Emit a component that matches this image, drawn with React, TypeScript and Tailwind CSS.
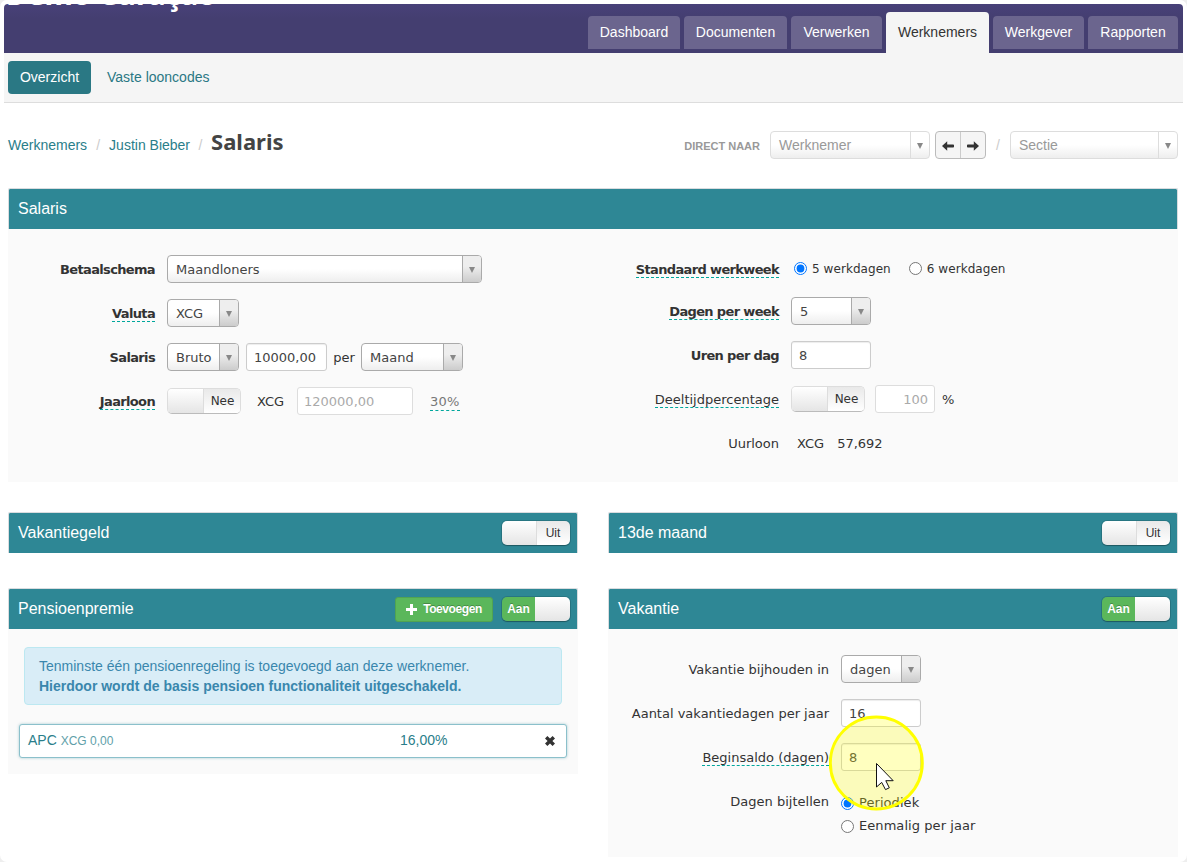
import { useState } from 'react';
import type { ReactNode } from 'react';
import clsx from 'clsx';

const FORM_FONT = "font-['DejaVu_Sans',sans-serif] text-[13px]";

const NAV_ITEMS = [
  { label: 'Dashboard', width: 'w-[92px]' },
  { label: 'Documenten', width: 'w-[103px]' },
  { label: 'Verwerken', width: 'w-[91px]' },
  { label: 'Werknemers', width: 'w-[103px]' },
  { label: 'Werkgever', width: 'w-[91px]' },
  { label: 'Rapporten', width: 'w-[90px]' },
];

// ---------------------------------------------------------------------------
// Icons
// ---------------------------------------------------------------------------

function ArrowIcon({ flip = false }: { flip?: boolean }) {
  return (
    <svg viewBox="0 0 12 10" className={clsx('h-[10px] w-3 fill-current', flip && '-scale-x-100')}>
      <path d="M0 5 5.2 0.3V3.4H11.2Q12 3.4 12 4.2V5.8Q12 6.6 11.2 6.6H5.2V9.7Z" />
    </svg>
  );
}

function PlusIcon() {
  return (
    <svg viewBox="0 0 11 11" className="h-[11px] w-[11px] fill-current">
      <path d="M4 0h3v4h4v3H7v4H4V7H0V4h4z" />
    </svg>
  );
}

function CrossIcon() {
  return (
    <svg viewBox="0 0 10 10" className="h-[10px] w-[10px] fill-current">
      <path d="M2.4 0 5 2.6 7.6 0 10 2.4 7.4 5 10 7.6 7.6 10 5 7.4 2.4 10 0 7.6 2.6 5 0 2.4z" />
    </svg>
  );
}

// ---------------------------------------------------------------------------
// Form controls
// ---------------------------------------------------------------------------

interface SelectProps {
  value: string;
  className: string;
  muted?: boolean;
}

function Select({ value, className, muted = false }: SelectProps) {
  return (
    <button
      type="button"
      className={clsx(
        'flex h-7 shrink-0 overflow-hidden rounded-[4px] border bg-gradient-to-b from-white from-50% to-[#eee] text-left',
        muted ? 'border-[#ddd] leading-[26px] text-[#999]' : 'border-[#aaa] leading-7 text-[#444]',
        className,
      )}
    >
      <span className="flex-1 pl-2 whitespace-nowrap">{value}</span>
      <span
        className={clsx(
          'flex h-full w-[19px] items-center justify-center border-l pt-[2px] pr-px',
          muted ? 'border-[#ddd]' : 'border-[#aaa] bg-gradient-to-b from-[#eee] from-40% to-[#ccc]',
        )}
      >
        <svg viewBox="0 0 6 6" className="h-[6px] w-[6px] fill-[#888]">
          <path d="M0 0h6L3 6z" />
        </svg>
      </span>
    </button>
  );
}

interface TextInputProps {
  value: string;
  className: string;
  disabled?: boolean;
}

function TextInput({ value, className, disabled = false }: TextInputProps) {
  return (
    <input
      type="text"
      defaultValue={value}
      disabled={disabled}
      className={clsx(
        'h-7 shrink-0 rounded-[3px] border bg-white',
        disabled
          ? 'border-[#ddd] px-[6px] text-[#aaa]'
          : 'border-[#ccc] px-[7px] text-[#444] shadow-[inset_0_1px_1px_rgba(0,0,0,0.075)]',
        className,
      )}
    />
  );
}

interface ToggleProps {
  initial?: boolean;
  onLabel?: string;
  offLabel?: string;
  header?: boolean;
}

function Toggle({ initial = false, onLabel = 'Aan', offLabel = 'Uit', header = false }: ToggleProps) {
  const [on, setOn] = useState(initial);
  return (
    <button
      type="button"
      aria-pressed={on}
      onClick={() => setOn(!on)}
      className={clsx(
        'flex shrink-0 overflow-hidden rounded-[5px]',
        header
          ? "h-6 w-[68px] font-['Liberation_Sans',sans-serif] text-xs leading-6 shadow-[0_0_0_1px_rgba(0,0,0,0.12),0_1px_1px_rgba(0,0,0,0.25)]"
          : 'h-[26px] w-[74px] border border-[#ddd] border-b-[#bbb] text-xs leading-[25px]',
      )}
    >
      {on && (
        <span className="w-[33px] bg-[#5bb75b] text-center font-bold text-white [text-shadow:0_-1px_0_rgba(0,0,0,0.25)]">
          {onLabel}
        </span>
      )}
      <span className="flex-1 bg-gradient-to-b from-white to-[#e5e5e5]" />
      {!on && (
        <span
          className={clsx(
            'border-l border-[#ddd] bg-gradient-to-b from-[#e9e9e9] to-white text-center text-[#333]',
            header ? 'w-[34px] pr-px' : 'w-[37px] pl-px',
          )}
        >
          {offLabel}
        </span>
      )}
    </button>
  );
}

interface RadioProps {
  name: string;
  label: string;
  checked?: boolean;
  small?: boolean;
}

function Radio({ name, label, checked = false, small = false }: RadioProps) {
  return (
    <label className="flex items-center gap-[5px] whitespace-nowrap">
      <input
        type="radio"
        name={name}
        defaultChecked={checked}
        className={clsx('m-0 h-[13px] w-[13px]', small && 'mb-[2px]')}
      />
      <span className={small ? 'text-xs tracking-[0.005em]' : 'tracking-[0.005em]'}>{label}</span>
    </label>
  );
}

interface FieldProps {
  label: string;
  labelWidth: string;
  bold?: boolean;
  hint?: boolean;
  gap?: string;
  children?: ReactNode;
}

/** One row: right-aligned label, optionally with a dashed tooltip line, then its controls. */
function Field({ label, labelWidth, bold = false, hint = false, gap = 'gap-3', children }: FieldProps) {
  return (
    <div className={clsx('flex h-7 items-center', gap)}>
      <span className={clsx('flex shrink-0 justify-end whitespace-nowrap', labelWidth)}>
        <span
          className={clsx(
            'mt-[2px] h-4 leading-4',
            bold && 'font-bold tracking-[-0.05em]',
            hint && 'border-b border-dashed border-[#00a79d]',
          )}
        >
          {label}
        </span>
      </span>
      {children}
    </div>
  );
}

// ---------------------------------------------------------------------------
// Panel
// ---------------------------------------------------------------------------

interface PanelProps {
  title: string;
  className?: string;
  actions?: ReactNode;
  children?: ReactNode;
}

function Panel({ title, className, actions, children }: PanelProps) {
  return (
    <section className={clsx('bg-[#fafafa]', className)}>
      <header className="flex h-[41px] items-center justify-between rounded-t-[2px] border-x border-t border-[#d9dcdf] bg-[#2e8795] bg-clip-padding pr-[7px] pl-[9px]">
        <h2 className="text-base text-white">{title}</h2>
        <div className="flex items-center gap-[9px]">{actions}</div>
      </header>
      {children}
    </section>
  );
}

// ---------------------------------------------------------------------------
// Page sections
// ---------------------------------------------------------------------------

function TopBar() {
  return (
    <div className="flex h-[49px] justify-between overflow-hidden rounded-t-[4px] bg-gradient-to-b from-[#484179] to-[#443e70] to-30% pr-[5px]">
      <div className="-mt-[28px] ml-[2px] h-9 font-['Noto_Sans',sans-serif] text-[29px] leading-9 font-bold whitespace-nowrap text-white">
        Demo Curaçao
      </div>
      <nav className="flex items-start gap-1 text-sm">
        {NAV_ITEMS.map(({ label, width }) => (
          <a
            key={label}
            href="#"
            className={clsx(
              'rounded-t-[4px] text-center whitespace-nowrap',
              width,
              label === 'Werknemers'
                ? 'mt-2 h-[41px] bg-[#f5f5f5] leading-[41px] text-[#333]'
                : 'mt-3 h-[33px] bg-[#6b658e] leading-[33px] text-white',
            )}
          >
            {label}
          </a>
        ))}
      </nav>
    </div>
  );
}

function TitleRow() {
  return (
    <div className="mt-[28px] flex h-7 items-center justify-between pr-[5px] pl-1">
      <div className="-mt-2 flex items-baseline text-sm text-[#2a7e8a]">
        <a href="#">Werknemers</a>
        <span className="w-[22px] text-center text-[#ccc]">/</span>
        <a href="#">Justin Bieber</a>
        <span className="w-[21px] text-center text-[#ccc]">/</span>
        <h1 className="font-['Noto_Sans',sans-serif] text-[22px] leading-7 font-bold text-[#444]">Salaris</h1>
      </div>
      <div className="flex items-center text-sm">
        <span className="mt-[3px] mr-[10px] text-[11px] font-bold text-[#999]">DIRECT NAAR</span>
        <Select value="Werknemer" className="w-[160px]" muted />
        <div className="ml-[5px] flex h-7 w-[51px] overflow-hidden rounded-[4px] border border-[#bbb] bg-[#f5f5f5] pt-px text-[#333]">
          <button
            type="button"
            aria-label="Vorige"
            className="-mt-px flex flex-1 items-center justify-center border-r border-[#ccc] pt-[2px]"
          >
            <ArrowIcon />
          </button>
          <button type="button" aria-label="Volgende" className="-mt-px flex flex-1 items-center justify-center pt-[2px]">
            <ArrowIcon flip />
          </button>
        </div>
        <span className="w-6 text-center text-[#ccc]">/</span>
        <Select value="Sectie" className="w-[168px]" muted />
      </div>
    </div>
  );
}

function SalaryPanel() {
  return (
    <Panel title="Salaris" className="mt-[29px] h-[294px]">
      <div className={clsx('flex text-[#333]', FORM_FONT)}>
        <div className="flex w-[600px] flex-col gap-4 pt-[26px]">
          <Field label="Betaalschema" labelWidth="w-[147px]" bold>
            <Select value="Maandloners" className="w-[315px]" />
          </Field>
          <Field label="Valuta" labelWidth="w-[147px]" bold hint>
            <Select value="XCG" className="w-[72px]" />
          </Field>
          <Field label="Salaris" labelWidth="w-[147px]" bold>
            <div className="flex items-center">
              <Select value="Bruto" className="w-[72px]" />
              <TextInput value="10000,00" className="ml-[7px] w-[81px]" />
              <span className="w-[34px] pt-[2px] text-center">per</span>
              <Select value="Maand" className="w-[102px]" />
            </div>
          </Field>
          <Field label="Jaarloon" labelWidth="w-[147px]" bold hint>
            <div className="flex items-center">
              <Toggle offLabel="Nee" />
              <span className="ml-4 w-10 pt-[2px]">XCG</span>
              <TextInput value="120000,00" className="w-[116px]" disabled />
              <span className="mt-[2px] ml-[17px] border-b border-dashed border-[#00a79d] leading-4 tracking-[0.02em] text-[#777]">
                30%
              </span>
            </div>
          </Field>
        </div>
        <div className="flex flex-col gap-4 pt-[26px]">
          <div className="-mb-[2px]">
            <Field label="Standaard werkweek" labelWidth="w-[171px]" bold hint gap="gap-[15px]">
              <div className="flex gap-[18px]">
                <Radio name="werkweek" label="5 werkdagen" checked small />
                <Radio name="werkweek" label="6 werkdagen" small />
              </div>
            </Field>
          </div>
          <Field label="Dagen per week" labelWidth="w-[171px]" bold hint>
            <Select value="5" className="w-20" />
          </Field>
          <Field label="Uren per dag" labelWidth="w-[171px]" bold>
            <TextInput value="8" className="w-20" />
          </Field>
          <Field label="Deeltijdpercentage" labelWidth="w-[171px]" hint>
            <div className="flex items-center">
              <Toggle offLabel="Nee" />
              <TextInput value="100" className="ml-[10px] w-[60px] text-right" disabled />
              <span className="ml-[7px] pt-[2px]">%</span>
            </div>
          </Field>
          <Field label="Uurloon" labelWidth="w-[171px]" gap="gap-[18px]">
            <span className="flex gap-[13px] pt-[2px]">
              <span>XCG</span>
              <span>57,692</span>
            </span>
          </Field>
        </div>
      </div>
    </Panel>
  );
}

function PensionPanel() {
  return (
    <Panel
      title="Pensioenpremie"
      className="h-[186px]"
      actions={
        <>
          <button
            type="button"
            className="flex h-[25px] w-[98px] items-center justify-center gap-[6px] rounded-[3px] border border-[#51a351] bg-[#5bb75b] text-xs font-bold tracking-[-0.035em] text-white [text-shadow:0_-1px_0_rgba(0,0,0,0.25)]"
          >
            <PlusIcon />
            Toevoegen
          </button>
          <Toggle header initial />
        </>
      }
    >
      <div className="mx-4 mt-[18px] h-[58px] rounded-[4px] border border-[#bce8f1] bg-[#d9edf7] px-[14px] pt-2 text-sm leading-5 text-[#3a87ad]">
        <p>Tenminste één pensioenregeling is toegevoegd aan deze werknemer.</p>
        <p className="font-bold">Hierdoor wordt de basis pensioen functionaliteit uitgeschakeld.</p>
      </div>
      <div className="mx-[11px] mt-[19px] flex h-[34px] items-center rounded-[3px] border border-[#8bc0cb] bg-white pr-[11px] pl-2 text-sm text-[#2a7e8a] shadow-[0_0_3px_rgba(46,135,149,0.4)]">
        <span className="w-[372px] pb-[2px]">
          APC <span className="text-xs text-[#5f9fa9]">XCG 0,00</span>
        </span>
        <span className="flex-1 pb-[2px]">16,00%</span>
        <button type="button" aria-label="Verwijderen" className="pb-px text-[#333]">
          <CrossIcon />
        </button>
      </div>
    </Panel>
  );
}

function HolidayPanel() {
  return (
    <Panel title="Vakantie" className="h-[269px]" actions={<Toggle header initial />}>
      <div className={clsx('flex flex-col gap-4 pt-[26px] text-[#333]', FORM_FONT)}>
        <Field label="Vakantie bijhouden in" labelWidth="w-[221px]">
          <Select value="dagen" className="w-20" />
        </Field>
        <Field label="Aantal vakantiedagen per jaar" labelWidth="w-[221px]">
          <TextInput value="16" className="w-20" />
        </Field>
        <Field label="Beginsaldo (dagen)" labelWidth="w-[221px]" hint>
          <TextInput value="8" className="w-20" />
        </Field>
        <div className="flex gap-3">
          <Field label="Dagen bijtellen" labelWidth="w-[221px]" />
          <div className="flex flex-col gap-[3px] pt-[6px] leading-5">
            <Radio name="bijtellen" label="Periodiek" checked />
            <Radio name="bijtellen" label="Eenmalig per jaar" />
          </div>
        </div>
      </div>
    </Panel>
  );
}

/** Mouse pointer inside a yellow highlight ring. */
function PointerHighlight() {
  return (
    <div className="pointer-events-none absolute top-[715px] left-[829px] h-[96px] w-[96px]">
      <svg viewBox="0 0 96 96" className="h-full w-full">
        <circle cx="47.3" cy="48" r="46" fill="#ffff00" fillOpacity="0.25" stroke="#ffff00" strokeWidth="3" />
        <path d="M47.5 48.5V72l5.2-4.6 3.8 7.2 3.8-1.8-3.5-7.1h7.4z" fill="#fff" stroke="#111" strokeWidth="1" />
      </svg>
    </div>
  );
}

export default function App() {
  return (
    <div className="h-[862px] w-[1187px] bg-[#eee]">
      <div className="relative h-full w-full overflow-hidden rounded-[7px] bg-white p-1 font-['Liberation_Sans',Arial,sans-serif]">
        <TopBar />
        <div className="flex h-[50px] items-center gap-4 border-b border-[#ddd] bg-[#f5f5f5] pl-1 text-sm">
          <a href="#" className="h-[33px] w-[83px] rounded-[4px] bg-[#2a7884] text-center leading-[33px] text-white">
            Overzicht
          </a>
          <a href="#" className="pb-px text-[#2a7884]">
            Vaste looncodes
          </a>
        </div>
        <TitleRow />
        <main className="pr-[5px] pl-1">
          <SalaryPanel />
          <div className="mt-[30px] grid grid-cols-2 gap-[30px]">
            <div className="flex flex-col gap-[35px]">
              <Panel title="Vakantiegeld" actions={<Toggle header />} />
              <PensionPanel />
            </div>
            <div className="flex flex-col gap-[35px]">
              <Panel title="13de maand" actions={<Toggle header />} />
              <HolidayPanel />
            </div>
          </div>
        </main>
        <PointerHighlight />
      </div>
    </div>
  );
}
